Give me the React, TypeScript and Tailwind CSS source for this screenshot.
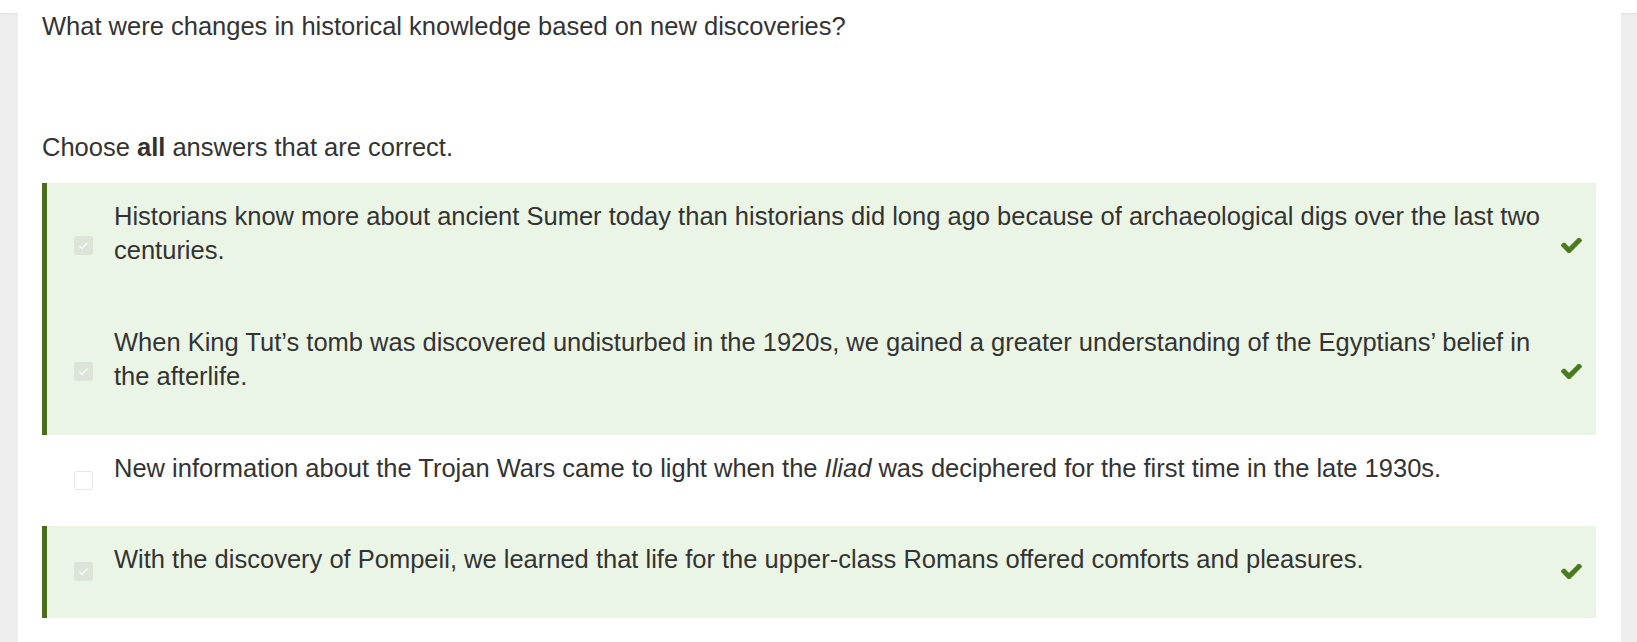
import React from "react";

type Choice = {
  id: number;
  text: React.ReactNode;
  correct: boolean;
};

const choices: Choice[] = [
  {
    id: 1,
    text: "Historians know more about ancient Sumer today than historians did long ago because of archaeological digs over the last two centuries.",
    correct: true,
  },
  {
    id: 2,
    text: "When King Tut\u2019s tomb was discovered undisturbed in the 1920s, we gained a greater understanding of the Egyptians\u2019 belief in the afterlife.",
    correct: true,
  },
  {
    id: 3,
    text: (
      <>
        New information about the Trojan Wars came to light when the <em>Iliad</em> was deciphered for the first time in the late 1930s.
      </>
    ),
    correct: false,
  },
  {
    id: 4,
    text: "With the discovery of Pompeii, we learned that life for the upper-class Romans offered comforts and pleasures.",
    correct: true,
  },
];

function CheckIcon({ className }: { className?: string }) {
  return (
    <svg viewBox="0 62 512 390" className={className} fill="currentColor" stroke="currentColor" strokeWidth="28" strokeLinejoin="round">
      <path d="M173.898 439.404l-166.4-166.4c-9.997-9.997-9.997-26.206 0-36.204l36.203-36.204c9.997-9.998 26.207-9.998 36.204 0L192 312.69 432.095 72.596c9.997-9.997 26.207-9.997 36.204 0l36.203 36.204c9.997 9.997 9.997 26.206 0 36.204l-294.4 294.401c-9.998 9.997-26.207 9.997-36.204-.001z" />
    </svg>
  );
}

function Box({ checked }: { checked: boolean }) {
  if (!checked) {
    return <div className="h-[19px] w-[19px] shrink-0 rounded-[3px] border border-[#e6e6e6] bg-white" />;
  }
  return (
    <div className="flex h-[19px] w-[19px] shrink-0 items-center justify-center rounded-[3px] bg-[#dbe4d6]">
      <svg viewBox="0 0 16 16" className="h-[13px] w-[13px] text-[#f4f7f2]" fill="none" stroke="currentColor" strokeWidth="2">
        <path d="M3 8.5l3 3 7-7" />
      </svg>
    </div>
  );
}

function ChoiceRow({ choice }: { choice: Choice }) {
  return (
    <div
      className={
        choice.correct
          ? "flex items-center border-l-[5px] border-[#4b6d1c] bg-[#ebf5e5]"
          : "flex items-center border-l-[5px] border-transparent bg-white"
      }
    >
      <div className="pl-[27px] pr-[21px]">
        <Box checked={choice.correct} />
      </div>
      <div className="flex-1 pb-[41px] pt-[16px]">{choice.text}</div>
      <div className="flex w-[52px] justify-center pl-[2px]">
        {choice.correct && <CheckIcon className="h-[15px] w-[21px] text-[#4a7a1f]" />}
      </div>
    </div>
  );
}

export default function App() {
  return (
    <div className="min-h-[642px] bg-[#eeeeee] text-[25.5px] leading-[34.5px] text-[#333333] [font-family:'Liberation_Sans',Arial,sans-serif]">
      <div className="h-[13px] bg-white shadow-[0_1px_2px_rgba(0,0,0,0.06)]" />
      <div className="pl-[18px] pr-[16px]">
        <main className="min-h-[629px] bg-white pl-[24px] pr-[24px]">
          <p className="leading-[26px]">What were changes in historical knowledge based on new discoveries?</p>
          <p className="mt-[91px]">
            Choose <strong className="font-bold">all</strong> answers that are correct.
          </p>
          <section className="mt-[18px] mr-[1px]">
            {choices.map((c) => (
              <ChoiceRow key={c.id} choice={c} />
            ))}
          </section>
        </main>
      </div>
    </div>
  );
}
